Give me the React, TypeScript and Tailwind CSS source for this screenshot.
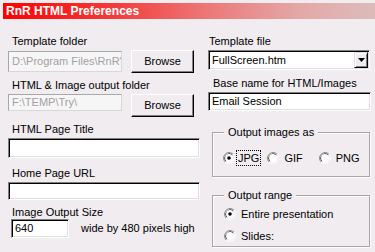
import React from "react";

const font = { fontFamily: '"Liberation Sans", Arial, sans-serif' };

function Label({ children, className = "" }: { children: React.ReactNode; className?: string }) {
  return <div className={`text-[11px] leading-[13px] text-black ${className}`}>{children}</div>;
}

function Sunken({ value, className = "" }: { value?: string; className?: string }) {
  return (
    <div className={`flex items-center border border-t-[#808080] border-l-[#808080] border-r-white border-b-white bg-white pl-[3px] text-[11px] text-black shadow-[inset_1px_1px_0_#000,inset_-1px_-1px_0_#dfdfdf] ${className}`}>
      {value}
    </div>
  );
}

function Disabled({ value, className = "" }: { value: string; className?: string }) {
  return (
    <div className={`flex items-center overflow-hidden whitespace-nowrap border border-[#a8a8a8] border-b-[#d8d8d8] border-r-[#d8d8d8] bg-[#f6f6f6] pl-[3px] text-[11px] text-[#a4a0a4] ${className}`}>
      {value}
    </div>
  );
}

function Button({ children, className = "" }: { children: React.ReactNode; className?: string }) {
  return (
    <div className={`flex items-center justify-center border border-t-white border-l-white border-r-black border-b-black bg-[#f0ecf0] text-[11px] text-black shadow-[inset_-1px_-1px_0_#808080] ${className}`}>
      {children}
    </div>
  );
}

function Radio({ checked }: { checked?: boolean }) {
  return (
    <svg width="12" height="12" viewBox="0 0 12 12" className="shrink-0">
      <path d="M10 2.2A5.5 5.5 0 0 0 2.2 10" fill="none" stroke="#808080" strokeWidth="1" />
      <path d="M9.2 3A4.4 4.4 0 0 0 3 9.2" fill="none" stroke="#000" strokeWidth="1" />
      <path d="M2 9.8A5.5 5.5 0 0 0 9.8 2" fill="none" stroke="#fff" strokeWidth="1" />
      <circle cx="6" cy="6" r="3.9" fill="#fff" />
      {checked && <circle cx="6" cy="6" r="1.8" fill="#000" />}
    </svg>
  );
}

function Group({ title, children, className = "" }: { title: string; children: React.ReactNode; className?: string }) {
  return (
    <div className={`relative border border-[#a8a4a8] shadow-[inset_1px_1px_0_#fff,1px_1px_0_#fff] ${className}`}>
      <div className="absolute -top-[8px] left-[11px] bg-[#f0ecf0] px-[4px] text-[11px] leading-[14px]">{title}</div>
      {children}
    </div>
  );
}

export default function App() {
  return (
    <div className="h-[252px] w-[375px] overflow-hidden bg-[#f0ecf0] pt-[3px] pl-[3px]" style={font}>
      <div className="flex h-[16px] items-center bg-[linear-gradient(90deg,#ff0000_0%,#f43c3c_30%,#ec7878_55%,#e4a8a8_80%,#dcbcb8_100%)] pl-[3px] text-[12px] font-bold text-white">
        RnR HTML Preferences
      </div>
      <div className="flex">
        <div className="ml-[5px] w-[192px]">
          <Label className="mt-[16px] ml-[4px]">Template folder</Label>
          <div className="mt-[2px] flex items-center">
            <Disabled value="D:\Program Files\RnR'" className="h-[21px] w-[114px]" />
            <Button className="ml-[9px] h-[23px] w-[63px]">Browse</Button>
          </div>
          <Label className="mt-[6px] ml-[4px]">HTML &amp; Image output folder</Label>
          <div className="mt-[2px] flex items-start">
            <Disabled value="F:\TEMP\Try\" className="h-[17px] w-[114px]" />
            <Button className="ml-[9px] h-[23px] w-[63px]">Browse</Button>
          </div>
          <Label className="mt-[6px] ml-[4px]">HTML Page Title</Label>
          <Sunken className="mt-[2px] h-[20px] w-[192px]" />
          <Label className="mt-[9px] ml-[4px]">Home Page URL</Label>
          <Sunken className="mt-[2px] h-[18px] w-[192px]" />
          <Label className="mt-[6px] ml-[4px]">Image Output Size</Label>
          <div className="mt-[0px] flex items-center">
            <Sunken value="640" className="ml-[3px] h-[19px] w-[58px]" />
            <span className="ml-[12px] text-[11px]">wide by 480 pixels high</span>
          </div>
        </div>
        <div className="ml-[8px] w-[162px]">
          <Label className="mt-[16px] ml-[1px]">Template file</Label>
          <div className="relative mt-[2px]">
            <Sunken value="FullScreen.htm" className="h-[20px] w-[162px]" />
            <div className="absolute top-[2px] right-[2px] flex h-[16px] w-[14px] items-center justify-center border border-t-[#dfdfdf] border-l-[#dfdfdf] border-r-black border-b-black bg-[#f0ecf0] shadow-[inset_1px_1px_0_#fff,inset_-1px_-1px_0_#808080]">
              <svg width="7" height="4" viewBox="0 0 7 4"><path d="M0 0h7L3.5 4z" fill="#000" /></svg>
            </div>
          </div>
          <Label className="mt-[7px] ml-[5px]">Base name for HTML/Images</Label>
          <Sunken value="Email Session" className="mt-[2px] h-[19px] w-[163px]" />
          <Group title="Output images as" className="mt-[21px] ml-[4px] h-[45px] w-[158px]">
            <div className="mt-[17px] ml-[10px] flex items-center text-[11px]">
              <Radio checked />
              <span className="ml-[1px] border border-dotted border-black px-[1px] leading-[14px]">JPG</span>
              <span className="ml-[6px]"><Radio /></span>
              <span className="ml-[5px]">GIF</span>
              <span className="ml-[16px]"><Radio /></span>
              <span className="ml-[5px]">PNG</span>
            </div>
          </Group>
          <Group title="Output range" className="mt-[18px] ml-[4px] h-[52px] w-[158px]">
            <div className="mt-[10px] ml-[11px] flex items-center text-[11px]">
              <Radio checked />
              <span className="ml-[5px]">Entire presentation</span>
            </div>
            <div className="mt-[5px] ml-[11px] flex items-center text-[11px]">
              <Radio />
              <span className="ml-[5px]">Slides:</span>
            </div>
          </Group>
        </div>
      </div>
    </div>
  );
}
